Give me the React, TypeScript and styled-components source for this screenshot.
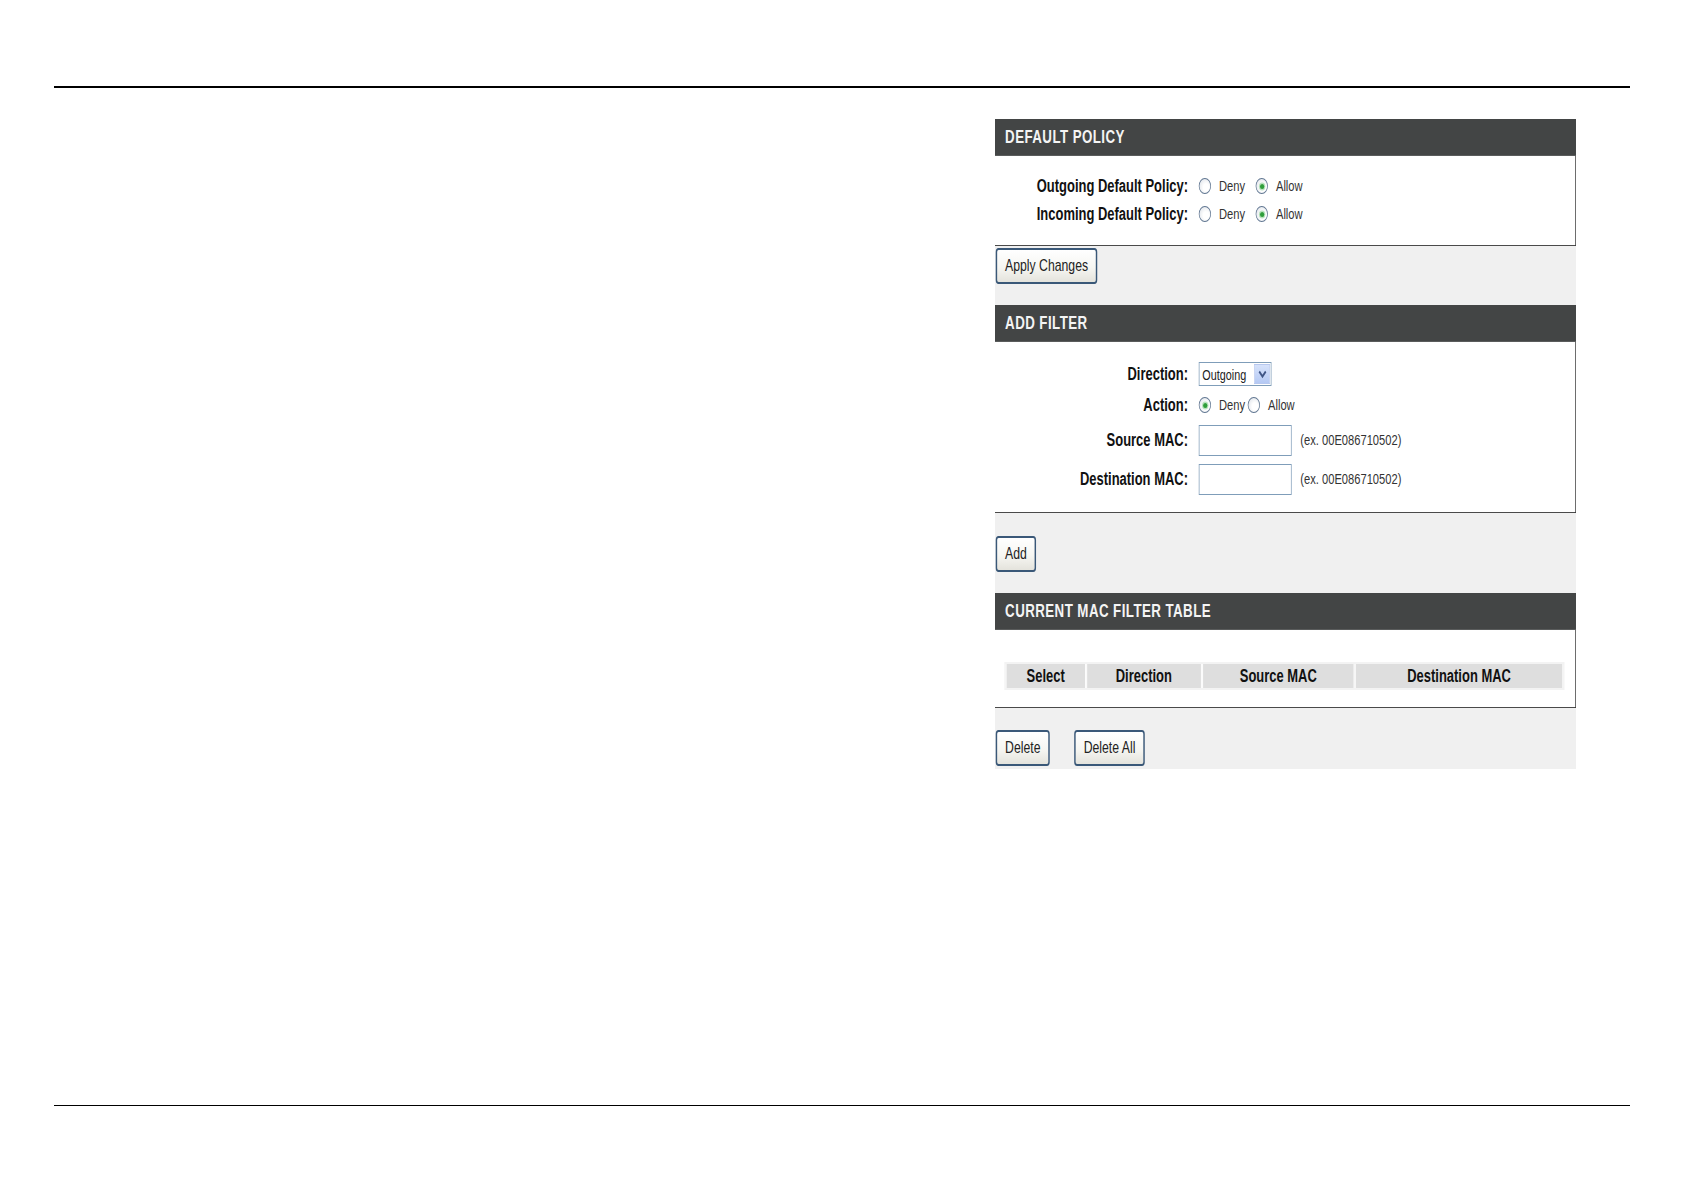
import React from "react";
import styled, { createGlobalStyle } from "styled-components";

// the screenshot is squeezed horizontally, so the panel is laid out at its
// natural width and narrowed as a whole
const SQUEEZE = 0.72;
const PANEL_WIDTH = 581;

const GlobalStyle = createGlobalStyle`
  html, body {
    margin: 0;
    padding: 0;
    background: #ffffff;
    overflow: hidden;
  }
  body {
    font-family: "Liberation Sans", Arial, sans-serif;
    color: #111111;
  }
`;

const Page = styled.div`
  width: 1684px;
  height: 1191px;
  padding: 86px 54px 0;
  box-sizing: border-box;
`;

const Rule = styled.hr<{ $weight: number }>`
  margin: 0;
  border: none;
  height: ${(p) => p.$weight}px;
  background: #000000;
`;

const Main = styled.main`
  height: 1017px;
  box-sizing: border-box;
  padding: 31px 54px 0 0;
  display: flex;
  justify-content: flex-end;
  align-items: flex-start;
`;

const Frame = styled.div`
  width: ${PANEL_WIDTH}px;
  overflow: hidden;
`;

const Panel = styled.div`
  width: ${Math.round(PANEL_WIDTH / SQUEEZE)}px;
  transform: scaleX(${SQUEEZE});
  transform-origin: 0 0;
`;

const SectionHeader = styled.div`
  height: 37px;
  box-sizing: border-box;
  padding-left: 14px;
  display: flex;
  align-items: center;
  background: #434545;
  border-bottom: 1px solid #5a5c5c;
  color: #f4f4f4;
  font-weight: bold;
  font-size: 18.5px;
  letter-spacing: 0.6px;
`;

const SectionBody = styled.div<{ $pad: string }>`
  background: #ffffff;
  padding: ${(p) => p.$pad};
  border-right: 1px solid #2a2a2a;
  border-bottom: 1px solid #4a4a4a;
`;

const ButtonBar = styled.div<{ $pad: string }>`
  background: #f0f0f0;
  padding: ${(p) => p.$pad};
  display: flex;
  align-items: center;
  gap: 33px;
`;

const Button = styled.button`
  height: 36px;
  padding: 0 11px;
  margin: 0 0 0 1px;
  border: 2px solid #3a5878;
  border-radius: 4px;
  background: linear-gradient(#ffffff, #f6f6f2 55%, #e4e3dc);
  font-family: "Liberation Sans", Arial, sans-serif;
  font-size: 17px;
  color: #222222;
  cursor: pointer;
`;

const FormRow = styled.div<{ $h: number }>`
  height: ${(p) => p.$h}px;
  display: flex;
  align-items: center;
`;

const Label = styled.div`
  width: 268px;
  flex-shrink: 0;
  text-align: right;
  font-weight: bold;
  font-size: 18px;
  color: #111111;
`;

const Field = styled.div<{ $gap?: number }>`
  padding-left: 15px;
  display: flex;
  align-items: center;
  gap: ${(p) => p.$gap ?? 15}px;
`;

const Option = styled.label`
  display: flex;
  align-items: center;
  gap: 11px;
  font-size: 15.5px;
  color: #333333;
`;

const Radio = styled.span<{ $checked?: boolean }>`
  position: relative;
  width: 17px;
  height: 16px;
  box-sizing: border-box;
  border: 1.5px solid #5f7590;
  border-radius: 50%;
  background: radial-gradient(circle at 60% 60%, #ffffff 30%, #d9dee5 100%);

  &::after {
    content: "";
    display: ${(p) => (p.$checked ? "block" : "none")};
    position: absolute;
    left: 50%;
    top: 50%;
    width: 6px;
    height: 5px;
    margin: -2.5px 0 0 -3px;
    border-radius: 50%;
    background: #2f9e3a;
    box-shadow: 0 0 0 1.5px #b9e2bd;
  }
`;

const Select = styled.div`
  width: 101px;
  height: 24px;
  box-sizing: border-box;
  border: 1px solid #7f9db9;
  background: #ffffff;
  display: flex;
  align-items: stretch;
  font-size: 15px;
  color: #222222;
`;

const SelectValue = styled.span`
  flex: 1;
  padding-left: 4px;
  display: flex;
  align-items: center;
`;

const SelectArrow = styled.span`
  width: 20px;
  margin: 1px;
  background: linear-gradient(#d6e2fb, #b5c9f4);
  border: 1px solid #b7c8ef;
  display: flex;
  align-items: center;
  justify-content: center;
`;

const TextInput = styled.input`
  width: 129px;
  height: 31px;
  box-sizing: border-box;
  border: 1px solid #7f9db9;
  margin: 0;
  padding: 0 4px;
  background: #ffffff;
`;

const Hint = styled.span`
  margin-left: -3px;
  font-size: 15.5px;
  color: #333333;
`;

const FilterTable = styled.table`
  margin-left: 13px;
  width: 778px;
  border-collapse: separate;
  border-spacing: 3px 2px;
  background: #f3f3f3;
`;

const HeadCell = styled.th<{ $w: number }>`
  width: ${(p) => p.$w}px;
  height: 24px;
  padding: 0;
  background: #dedede;
  box-shadow: 1px 0 0 #ffffff, -1px 0 0 #ffffff;
  font-size: 18px;
  font-weight: bold;
  color: #111111;
  text-align: center;
`;

const Chevron = () => (
  <svg width="13" height="10" viewBox="0 0 13 10">
    <path d="M2 2.5 L6.5 7.5 L11 2.5" fill="none" stroke="#3f5586" strokeWidth="2.4" />
  </svg>
);

type Choice = { label: string; checked: boolean };

const RadioGroup: React.FC<{ choices: Choice[]; gap?: number }> = ({ choices, gap }) => (
  <Field $gap={gap}>
    {choices.map((c) => (
      <Option key={c.label}>
        <Radio $checked={c.checked} />
        {c.label}
      </Option>
    ))}
  </Field>
);

const policies = [
  { label: "Outgoing Default Policy:", allow: true },
  { label: "Incoming Default Policy:", allow: true },
];

const columns = [
  { title: "Select", width: 108 },
  { title: "Direction", width: 157 },
  { title: "Source MAC", width: 208 },
  { title: "Destination MAC", width: 285 },
];

export default function App() {
  return (
    <>
      <GlobalStyle />
      <Page>
        <Rule $weight={2} />
        <Main>
          <Frame>
            <Panel>
              <SectionHeader>DEFAULT POLICY</SectionHeader>
              <SectionBody $pad="16px 0 17px">
                {policies.map((p) => (
                  <FormRow key={p.label} $h={28}>
                    <Label>{p.label}</Label>
                    <RadioGroup
                      choices={[
                        { label: "Deny", checked: !p.allow },
                        { label: "Allow", checked: p.allow },
                      ]}
                    />
                  </FormRow>
                ))}
              </SectionBody>
              <ButtonBar $pad="2px 0 21px">
                <Button>Apply Changes</Button>
              </ButtonBar>

              <SectionHeader>ADD FILTER</SectionHeader>
              <SectionBody $pad="17px 0 13px">
                <FormRow $h={30}>
                  <Label>Direction:</Label>
                  <Field>
                    <Select>
                      <SelectValue>Outgoing</SelectValue>
                      <SelectArrow>
                        <Chevron />
                      </SelectArrow>
                    </Select>
                  </Field>
                </FormRow>
                <FormRow $h={32}>
                  <Label>Action:</Label>
                  <RadioGroup
                    gap={4}
                    choices={[
                      { label: "Deny", checked: true },
                      { label: "Allow", checked: false },
                    ]}
                  />
                </FormRow>
                <FormRow $h={38}>
                  <Label>Source MAC:</Label>
                  <Field>
                    <TextInput />
                    <Hint>(ex. 00E086710502)</Hint>
                  </Field>
                </FormRow>
                <FormRow $h={40}>
                  <Label>Destination MAC:</Label>
                  <Field>
                    <TextInput />
                    <Hint>(ex. 00E086710502)</Hint>
                  </Field>
                </FormRow>
              </SectionBody>
              <ButtonBar $pad="23px 0 21px">
                <Button>Add</Button>
              </ButtonBar>

              <SectionHeader>CURRENT MAC FILTER TABLE</SectionHeader>
              <SectionBody $pad="32px 0 17px">
                <FilterTable>
                  <thead>
                    <tr>
                      {columns.map((c) => (
                        <HeadCell key={c.title} $w={c.width}>
                          {c.title}
                        </HeadCell>
                      ))}
                    </tr>
                  </thead>
                </FilterTable>
              </SectionBody>
              <ButtonBar $pad="22px 0 3px">
                <Button>Delete</Button>
                <Button>Delete All</Button>
              </ButtonBar>
            </Panel>
          </Frame>
        </Main>
        <Rule $weight={1} />
      </Page>
    </>
  );
}
